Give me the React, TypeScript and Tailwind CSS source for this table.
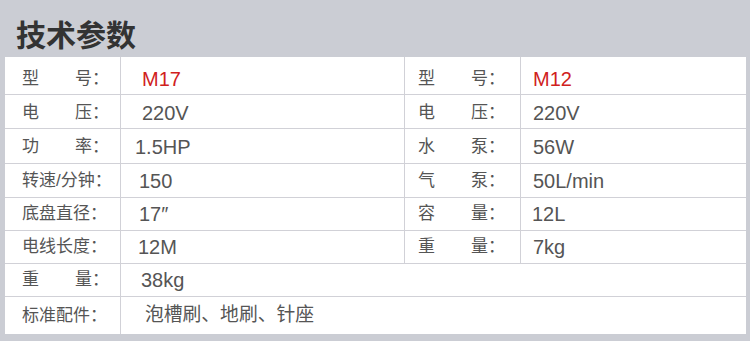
import React from "react";

const font = { fontFamily: '"Liberation Sans", "Noto Sans CJK SC", sans-serif' };

type Cell = { label: string[]; value: string; red?: boolean; pl: string; size?: string };

function Label({ parts }: { parts: string[] }) {
  if (parts.length === 2) {
    return (
      <div className="flex w-[87px] justify-between text-[17px] text-[#555]">
        <span>{parts[0]}</span>
        <span>{parts[1]}</span>
      </div>
    );
  }
  return <div className="text-[17px] text-[#555] whitespace-nowrap">{parts[0]}</div>;
}

function Value({ c }: { c: Cell }) {
  return (
    <div
      className={`${c.pl} ${c.size ?? "text-[20px]"} whitespace-nowrap ${c.red ? "text-[#d0211d]" : "text-[#555]"}`}
    >
      {c.value}
    </div>
  );
}

const rows: { h: string; pt: string; left: Cell; right?: Cell; border: boolean }[] = [
  {
    h: "h-[38px]",
    pt: "pt-[6px]",
    left: { label: ["型", "号："], value: "M17", red: true, pl: "pl-[21px]" },
    right: { label: ["型", "号："], value: "M12", red: true, pl: "pl-[12px]" },
    border: true,
  },
  {
    h: "h-[34px]",
    pt: "pt-[2px]",
    left: { label: ["电", "压："], value: "220V", pl: "pl-[21px]" },
    right: { label: ["电", "压："], value: "220V", pl: "pl-[12px]" },
    border: true,
  },
  {
    h: "h-[35px]",
    pt: "pt-[1px]",
    left: { label: ["功", "率："], value: "1.5HP", pl: "pl-[14px]" },
    right: { label: ["水", "泵："], value: "56W", pl: "pl-[12px]" },
    border: true,
  },
  {
    h: "h-[34px]",
    pt: "pt-0",
    left: { label: ["转速/分钟："], value: "150", pl: "pl-[18px]" },
    right: { label: ["气", "泵："], value: "50L/min", pl: "pl-[12px]" },
    border: true,
  },
  {
    h: "h-[33px]",
    pt: "pt-0",
    left: { label: ["底盘直径："], value: "17\u2033", pl: "pl-[18px]" },
    right: { label: ["容", "量："], value: "12L", pl: "pl-[11px]" },
    border: true,
  },
  {
    h: "h-[33px]",
    pt: "pt-0",
    left: { label: ["电线长度："], value: "12M", pl: "pl-[17px]" },
    right: { label: ["重", "量："], value: "7kg", pl: "pl-[12px]" },
    border: true,
  },
  {
    h: "h-[33px]",
    pt: "pt-0",
    left: { label: ["重", "量："], value: "38kg", pl: "pl-[20px]" },
    border: true,
  },
  {
    h: "h-[37px]",
    pt: "pt-0",
    left: { label: ["标准配件："], value: "泡槽刷、地刷、针座", pl: "pl-[24px]", size: "text-[18.8px]" },
    border: false,
  },
];

export default function App() {
  return (
    <div className="w-[750px] h-[341px] bg-[#cbcdd4] flex flex-col" style={font}>
      <div className="h-[57px] flex items-end pl-[16px] pb-[1px]">
        <div className="text-[30px] font-bold text-[#333] leading-[40px]">技术参数</div>
      </div>
      <div className="ml-[5px] mr-[4px] bg-white flex flex-col">
        {rows.map((r, i) => (
          <div
            key={i}
            className={`flex ${r.h} ${r.border ? "border-b border-[#d1d1d7]" : ""}`}
          >
            <div className={`w-[116px] shrink-0 border-r border-[#d1d1d7] flex items-center pl-[17px] ${r.pt}`}>
              <Label parts={r.left.label} />
            </div>
            <div
              className={`${r.right ? "w-[284px] border-r border-[#d1d1d7]" : "flex-1"} shrink-0 flex items-center ${r.pt}`}
            >
              <Value c={r.left} />
            </div>
            {r.right && (
              <>
                <div className={`w-[116px] shrink-0 border-r border-[#d1d1d7] flex items-center pl-[13px] ${r.pt}`}>
                  <Label parts={r.right.label} />
                </div>
                <div className={`flex-1 flex items-center ${r.pt}`}>
                  <Value c={r.right} />
                </div>
              </>
            )}
          </div>
        ))}
      </div>
    </div>
  );
}
